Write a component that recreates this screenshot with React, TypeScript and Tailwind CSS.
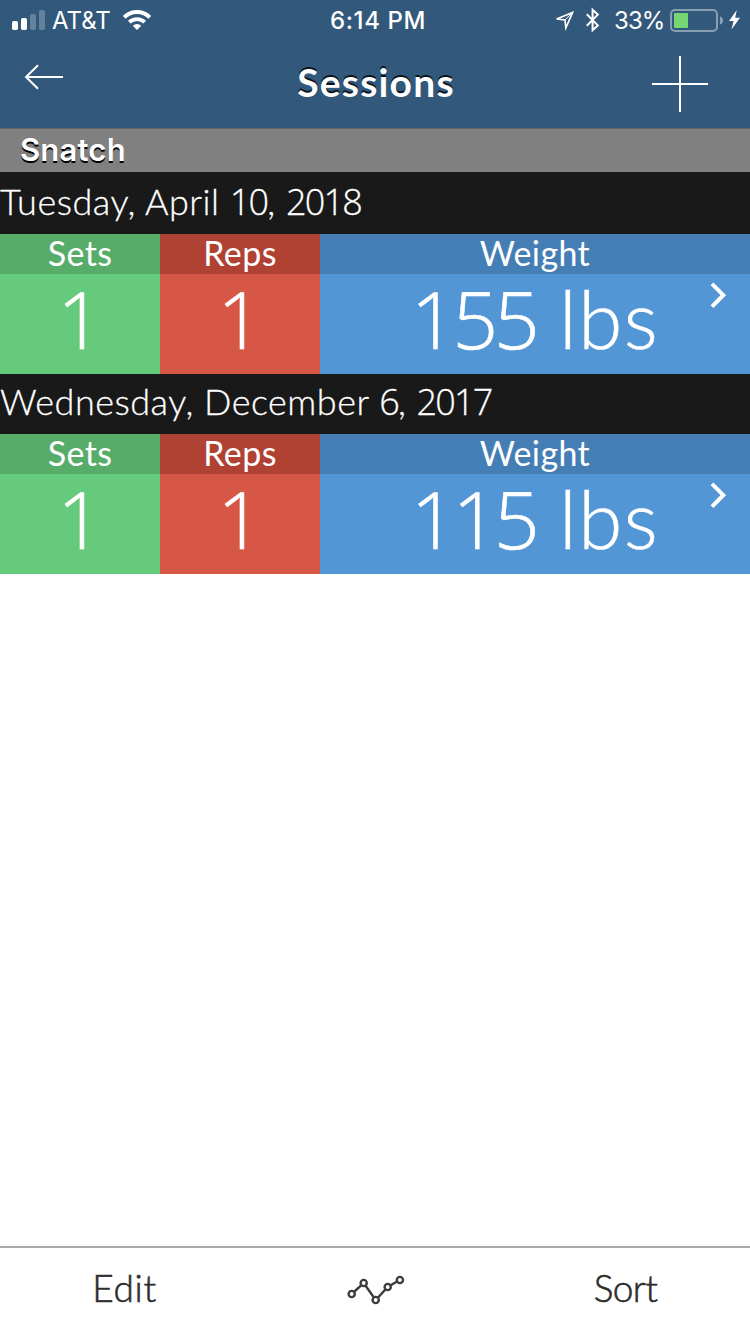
interface Session {
  date: string;
  sets: string;
  reps: string;
  weight: string;
}

const sessions: Session[] = [
  { date: 'Tuesday, April 10, 2018', sets: '1', reps: '1', weight: '155 lbs' },
  { date: 'Wednesday, December 6, 2017', sets: '1', reps: '1', weight: '115 lbs' },
];

/** Sets digits in a face whose "1" has no foot; the rest inherits. */
function Figures({ text }: { text: string }) {
  return (
    <>
      {text.split(/(\d+)/).map((part, i) =>
        /\d/.test(part) ? (
          <span key={i} className="font-['Open_Sans',sans-serif] leading-none tracking-[-0.05em]">
            {part}
          </span>
        ) : (
          part
        ),
      )}
    </>
  );
}

function StatusBar() {
  return (
    <div className="grid h-10 grid-cols-[250px_256px_244px] font-['Inter',sans-serif] text-[24px] leading-[42px]">
      <div className="flex pl-3">
        <svg className="h-10 w-[34px]" viewBox="0 0 34 40" fill="#fff">
          <rect x="0" y="21" width="6" height="9" rx="1.8" />
          <rect x="9" y="18" width="6" height="12" rx="1.8" />
          <rect x="18" y="14" width="6" height="16" rx="1.8" opacity=".25" />
          <rect x="27" y="10" width="6" height="20" rx="1.8" opacity=".25" />
        </svg>
        <span className="ml-[6px] w-[60px] whitespace-nowrap">AT&amp;T</span>
        <svg className="ml-[10px] h-10 w-[30px]" viewBox="122 0 30 40" fill="none" stroke="#fff">
          <path d="M124.2 17.3a18.2 18.2 0 0 1 25.6 0" strokeWidth="4" />
          <path d="M129.3 22.2a11 11 0 0 1 15.4 0" strokeWidth="3.8" />
          <path d="M137 30l-4.2-4.2a6 6 0 0 1 8.4 0z" fill="#fff" stroke="none" />
        </svg>
      </div>
      <div className="text-center font-medium tracking-[0.6px]">6:14 PM</div>
      <div className="flex">
        <svg className="ml-[48px] h-10 w-[20px]" viewBox="554 0 20 40">
          <path d="M572.6 12.4l-6.7 15.4-.9-7.9-8.4-.9z" fill="none" stroke="#fff" strokeWidth="1.7" />
          <path d="M572.6 12.4l-7.6 7.5" stroke="#fff" strokeWidth="1" />
        </svg>
        <svg className="ml-[12px] h-10 w-[14px]" viewBox="586 0 14 40" fill="none" stroke="#fff" strokeWidth="2">
          <path d="M586.8 14.2l11 11.2-5.2 4.8V9.8l5.2 4.8-11 11.2" />
        </svg>
        <span className="ml-[14px] w-[56px] tracking-[-0.9px] whitespace-nowrap">33%</span>
        <svg className="h-10 w-[72px]" viewBox="670 0 72 40">
          <rect x="671" y="10" width="46" height="21" rx="4" fill="none" stroke="#fff" strokeWidth="2" opacity=".42" />
          <rect x="674" y="13" width="14" height="15" rx="1" fill="#76d672" />
          <path d="M720 16.5c4 1 4 7 0 8z" fill="#fff" opacity=".45" />
          <path d="M736.8 10L729 21h4.6l-2.1 8.5 8.5-11.7h-4.8z" fill="#fff" />
        </svg>
      </div>
    </div>
  );
}

function NavBar() {
  return (
    <div className="grid h-[88px] grid-cols-[150px_1fr_150px]">
      <svg className="ml-6 h-20 w-10" viewBox="24 40 40 80" fill="none" stroke="#fff" strokeWidth="2">
        <path d="M63 77H26M38 65.3L26 77l12 11.7" />
      </svg>
      <h1 className="pl-0.5 text-center text-[39px] leading-[84px] font-bold tracking-[1.2px] [text-shadow:0_-2px_0_rgba(0,0,0,0.8)]">
        Sessions
      </h1>
      <svg className="ml-[50px] h-[88px] w-[60px]" viewBox="650 40 60 88" stroke="#fff" strokeWidth="2">
        <path d="M652 84h56M680 56v56" />
      </svg>
    </div>
  );
}

function SessionRow({ session }: { session: Session }) {
  const label = 'h-10 text-[34px] leading-[38px] tracking-[0.4px]';
  const value = 'h-[100px] text-[80px] leading-[88px] font-light';

  return (
    <>
      <div className="h-[60px] bg-[#191919] text-[36px] leading-[54px] font-light tracking-[0.5px] whitespace-nowrap [-webkit-text-stroke:0.3px_#fff]">
        <Figures text={session.date} />
      </div>
      <div className="grid grid-cols-[160px_160px_430px] text-center">
        <div className="bg-[#65ca7c]">
          <div className={`${label} bg-[#57ac69]`}>Sets</div>
          <div className={`${value} pr-1 [-webkit-text-stroke:0.6px_#fff]`}>
            <Figures text={session.sets} />
          </div>
        </div>
        <div className="bg-[#d65745]">
          <div className={`${label} bg-[#b04233]`}>Reps</div>
          <div className={`${value} pr-1 [-webkit-text-stroke:0.6px_#fff]`}>
            <Figures text={session.reps} />
          </div>
        </div>
        <div className="bg-[#5296d6]">
          <div className={`${label} bg-[#447eb4]`}>Weight</div>
          <div className={`${value} relative tracking-[1.5px] [-webkit-text-stroke:0.6px_#fff]`}>
            <Figures text={session.weight} />
            <svg
              className="absolute top-1 right-5 h-[34px] w-5"
              viewBox="0 0 20 34"
              fill="none"
              stroke="#fff"
              strokeWidth="4"
            >
              <path d="M2 5.8l11.3 11.4L2 28.6" />
            </svg>
          </div>
        </div>
      </div>
    </>
  );
}

function Toolbar() {
  return (
    <div className="grid h-[88px] grid-cols-[250px_250px_250px] border-t-2 border-[#a9a9a9] text-center text-[37px] leading-[80px] font-light text-[#2d2d2d] [-webkit-text-stroke:0.6px_#2d2d2d]">
      <div className="pr-px tracking-[0.7px]">Edit</div>
      <svg className="h-[86px] w-[250px]" viewBox="250 1248 250 86" fill="#fff" stroke="#3d3d3d" strokeWidth="2.4">
        <path d="M351.7 1294l12-11 12 17 12-13 12-7" fill="none" />
        <circle cx="351.7" cy="1294" r="3.1" />
        <circle cx="363.7" cy="1283" r="3.1" />
        <circle cx="375.7" cy="1300" r="3.1" />
        <circle cx="387.7" cy="1287" r="3.1" />
        <circle cx="399.9" cy="1280" r="3.1" />
      </svg>
      <div className="pl-px tracking-[-0.6px]">Sort</div>
    </div>
  );
}

export default function App() {
  return (
    <div className="flex h-[1334px] w-[750px] flex-col overflow-hidden bg-white font-['Lato',sans-serif] text-white">
      <header className="bg-[#32597c]">
        <StatusBar />
        <NavBar />
      </header>
      <div className="h-11 border-t border-[#666] bg-[#808080] pl-5 font-['Inter',sans-serif] text-[31px] leading-[42px] font-semibold tracking-[0.2px] [text-shadow:0_2px_0_#000]">
        Snatch
      </div>
      <main className="flex-1 bg-white">
        <div className="h-[2px] bg-[#191919]" />
        {sessions.map((session) => (
          <SessionRow key={session.date} session={session} />
        ))}
      </main>
      <Toolbar />
    </div>
  );
}
